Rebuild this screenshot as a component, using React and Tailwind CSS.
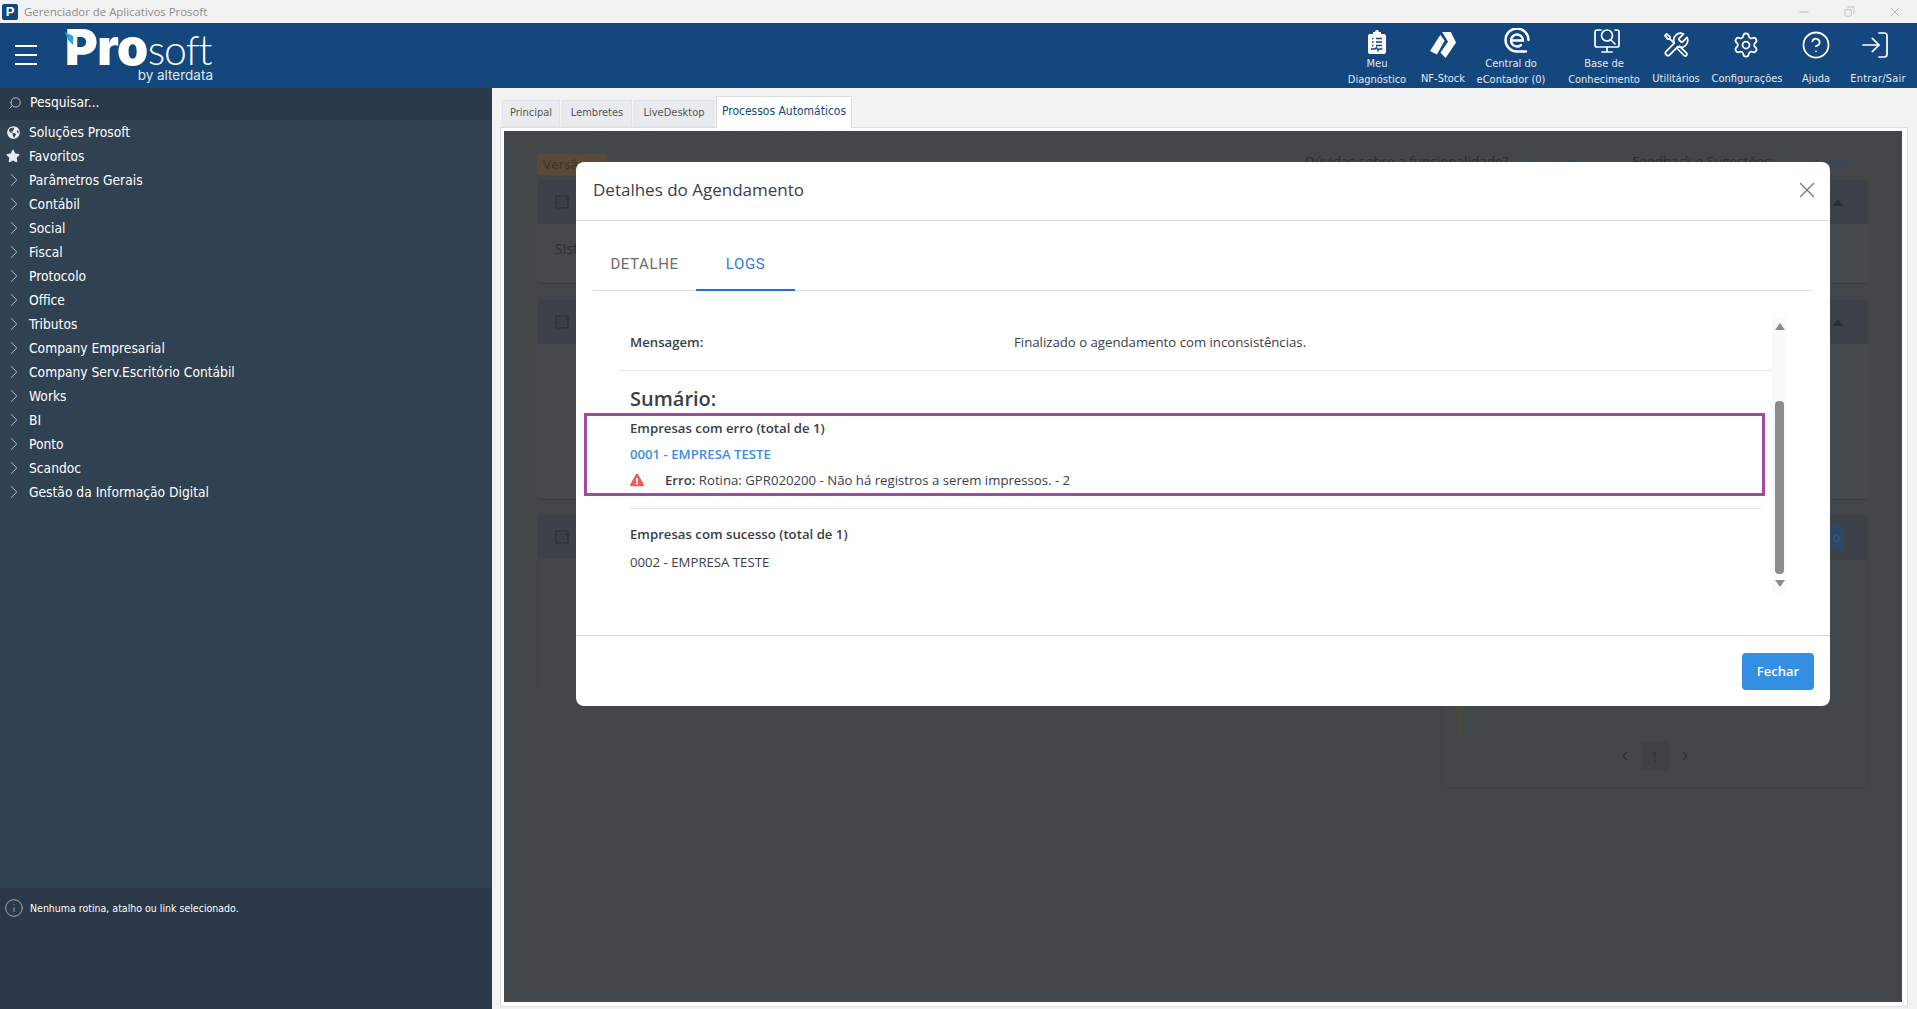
import React from 'react'
import { ChevronLeft, ChevronRight, CircleHelp, Info, LogIn, Search, Settings, X, Minus, Copy } from 'lucide-react'
import { FaExclamationTriangle, FaGlobeAmericas, FaStar } from 'react-icons/fa'

const MENU = [
  'Parâmetros Gerais', 'Contábil', 'Social', 'Fiscal', 'Protocolo', 'Office', 'Tributos',
  'Company Empresarial', 'Company Serv.Escritório Contábil', 'Works', 'BI', 'Ponto', 'Scandoc',
  'Gestão da Informação Digital',
]

function DiagnosticIcon() {
  return (
    <svg width="20" height="24" viewBox="0 0 20 24">
      <path fill="#fff" d="M6 2h2a2 2 0 0 1 4 0h2v2h3a2 2 0 0 1 2 2v16a2 2 0 0 1-2 2H3a2 2 0 0 1-2-2V6a2 2 0 0 1 2-2h3z" />
      <path stroke="#14477d" strokeWidth="1.4" fill="none" d="M5 8.5h1.5M9 8.5h6M5 12h1.5M9 12h6M5 15.5h1.500M9 15.5h6M4 19h4l1.500-1.500 1.500 3 1-1.500h3.500" />
    </svg>
  )
}

function StockIcon() {
  return (
    <svg width="26" height="26" viewBox="0 0 75 75" fill="#fff">
      <path d="M0 55 30 8l12 17-22 40z" />
      <path d="M35 0h25l15 30-30 45-15-15 22-32z" />
    </svg>
  )
}

function ContadorIcon() {
  return (
    <svg width="26" height="26" viewBox="0 0 26 26" fill="none" stroke="#fff" strokeWidth="2.4" strokeLinecap="round">
      <path d="M22 23.500H13A11.500 11.500 0 1 1 24.500 12" />
      <path d="M7 12.500h12a6 6 0 1 0-2 4.500" />
    </svg>
  )
}

function KnowledgeIcon() {
  return (
    <svg width="26" height="26" viewBox="0 0 26 26" fill="none" stroke="#fff" strokeWidth="1.7" strokeLinecap="round">
      <path d="M7 2H3a2 2 0 0 0-2 2v13a2 2 0 0 0 2 2h20a2 2 0 0 0 2-2V4a2 2 0 0 0-2-2h-2" />
      <circle cx="13" cy="7.500" r="5.500" />
      <path d="m17 12 4 4M13 19v4M8 24h10" />
    </svg>
  )
}

function ToolsIcon() {
  return (
    <svg width="28" height="28" viewBox="0 0 24 24" fill="none" stroke="#fff" strokeWidth="1.500" strokeLinecap="round" strokeLinejoin="round">
      <path d="M14.700 6.300a1 1 0 0 0 0 1.400l1.600 1.600a1 1 0 0 0 1.400 0l3.770-3.770a6 6 0 0 1-7.940 7.940l-6.910 6.910a2.120 2.120 0 0 1-3-3l6.910-6.910a6 6 0 0 1 7.940-7.940l-3.760 3.760z" />
      <path d="M2.500 4 4 2.500l3 2.500-.500 1.500L5 7zM6.500 6.500l4 4M13 15l2-2 6 6a1.400 1.400 0 0 1-2 2z" />
    </svg>
  )
}

function HeaderItem({ icon, lines, width, iconClass = '', labelClass = '' }) {
  return (
    <div className={`${width} h-full flex flex-col items-center`}>
      <div className={`h-[38px] pt-[5px] flex items-center justify-center ${iconClass}`}>{icon}</div>
      <div className={`text-[11px] leading-[16px] text-[#e3e9f0] text-center whitespace-nowrap h-[27px] flex flex-col justify-end ${lines.length === 1 ? 'pb-[1px]' : ''} ${labelClass}`}>
        {lines.map((l) => <span key={l}>{l}</span>)}
      </div>
    </div>
  )
}

function Logo() {
  return (
    <div className="relative w-[148px] ml-[13px] mt-[5px] flex flex-col text-white">
      <div className="h-[38px] leading-[38px] whitespace-nowrap">
        <span className="font-['Inter',sans-serif] text-[50px] font-black tracking-[-0.500px]">Pro</span>
        <span className="font-['Lato',sans-serif] text-[41px] font-light tracking-[-1px]">soft</span>
      </div>
      <div className="mt-[2px] text-right font-['Inter',sans-serif] text-[13.500px] leading-[14px] text-[#dfe7ef]">by alterdata</div>
      <svg className="absolute left-0 top-[4px]" width="9" height="13" viewBox="0 0 9 13">
        <path fill="#2ba3dc" d="M0 0l8 4v9L3 8z" />
      </svg>
    </div>
  )
}

function Caret() {
  return (
    <svg className="mr-[6px]" width="12" height="7" viewBox="0 0 12 7"><path fill="#70767f" d="M6 0l6 7H0z" /></svg>
  )
}

function CardHeader({ children }) {
  return <div className="h-[44px] bg-[#98a2b6] rounded-t flex items-center justify-between px-[18px]">{children}</div>
}

function CalendarGlyph() {
  return (
    <svg width="14" height="14" viewBox="0 0 14 14" fill="none" stroke="#6e7680" strokeWidth="1.200">
      <rect x="1" y="1" width="12" height="12" rx="1" />
      <path d="M1 4h12M4 7h6M4 9.500h6" strokeDasharray="1 1" />
    </svg>
  )
}

// Page behind the modal, seen through the backdrop
function BackgroundPage() {
  return (
    <div className="h-full bg-[#a7b1b9] pl-[33px] pr-[34px] pt-[23px] text-[#6e7680] text-[14px] font-['Open_Sans',sans-serif]">
      <div className="h-[21px] flex items-center justify-between">
        <div className="w-[70px] h-[21px] bg-[#e1b984] rounded px-[6px] text-[13px] leading-[21px] font-semibold text-[#a58a62]">Versão</div>
        <div className="flex gap-[50px] pr-[20px] pb-[6px] text-[13.500px]">
          <span>Dúvidas sobre a funcionalidade? <span className="underline text-[#7ab4f5]">Clique aqui</span></span>
          <span>Feedback e Sugestões: <span className="underline text-[#7ab4f5]">Clique aqui</span></span>
        </div>
      </div>
      <div className="mt-[5px] h-[104px] bg-[#acb4be] rounded border-b border-[#8f98a2]">
        <CardHeader>
          <CalendarGlyph />
          <Caret />
        </CardHeader>
        <div className="pl-[18px] pt-[14px]">Sistema</div>
      </div>
      <div className="mt-[16px] h-[200px] bg-[#acb4be] rounded border-b border-[#8f98a2]">
        <CardHeader>
          <CalendarGlyph />
          <Caret />
        </CardHeader>
      </div>
      <div className="mt-[15px]">
        <CardHeader>
          <CalendarGlyph />
          <div className="w-[60px] h-[25px] mr-[6px] rounded bg-[#6cb4ff] text-[#a9d0ff] text-right pr-[4px] leading-[25px] text-[13px]">o</div>
        </CardHeader>
        <div className="grid grid-cols-[1fr_427px]">
          <div className="h-[130px] border-l border-[#9aa4ac]" />
          <div className="h-[229px] border border-[#9aa4ac] rounded-b px-[16px]">
            <div className="text-right pt-[32px] pr-[21px] underline text-[#7ab4f5]">Detalhe</div>
            <div className="w-[3px] h-[76px] mt-[45px] bg-[#b8b98a]" />
            <div className="mt-[8px] flex items-center justify-center gap-[8px] text-[#767d87]">
              <ChevronLeft size={16} />
              <div className="w-[28px] h-[28px] rounded bg-[#9da5b1] flex items-center justify-center text-[14px]">1</div>
              <ChevronRight size={16} />
            </div>
          </div>
        </div>
      </div>
    </div>
  )
}

function LogsModal() {
  return (
    <div className="absolute left-[72px] top-[31px] w-[1254px] h-[544px] bg-white rounded-lg flex flex-col font-['Open_Sans',sans-serif] text-[#3b4046]">
      <div className="h-[59px] shrink-0 border-b border-[#d3dae2] flex items-center justify-between pl-[17px] pr-[10px] pb-[2px]">
        <div className="text-[17px] font-medium text-[#3a4148]">Detalhes do Agendamento</div>
        <X size={26} strokeWidth={1.200} className="text-[#777]" />
      </div>

      <div className="mx-[17px] mt-[21px] h-[49px] shrink-0 border-b border-[#e0e0e0] flex font-['Roboto',sans-serif] text-[15px] tracking-[0.6px]">
        <div className="w-[103px] h-[48px] pb-[3px] flex items-center justify-center text-[#6d6d6d]">DETALHE</div>
        <div className="w-[99px] h-[49px] pb-[3px] flex items-center justify-center text-[#2b80d6] border-b-2 border-[#1976d2]">LOGS</div>
      </div>

      <div className="mt-[27px] ml-[42px] w-[1169px] h-[275px] flex shrink-0">
        <div className="w-[1154px] shrink-0 text-[13.2px]">
          <div className="h-[53px] pb-[2px] pl-[12px] border-b border-[#e4e7eb] flex items-center">
            <div className="w-[384px] font-semibold">Mensagem:</div>
            <div>Finalizado o agendamento com inconsistências.</div>
          </div>
          <div className="pl-[12px] pr-[11px]">
            <div className="mt-[14px] text-[20px] leading-[28px] font-semibold">Sumário:</div>
            <div className="mt-[5px] leading-[20px] font-semibold">Empresas com erro (total de 1)</div>
            <div className="mt-[6px] leading-[20px] font-semibold text-[#3a8fe0]">0001 - EMPRESA TESTE</div>
            <div className="mt-[6px] leading-[20px] flex items-center">
              <FaExclamationTriangle size={14} className="text-[#f25a5a] mr-[21px]" />
              <span><b className="font-semibold">Erro:</b> Rotina: GPR020200 - Não há registros a serem impressos. - 2</span>
            </div>
            <div className="mt-[18px] border-t border-[#e1e4ea]" />
            <div className="mt-[15px] leading-[20px] font-semibold">Empresas com sucesso (total de 1)</div>
            <div className="mt-[8px] leading-[20px]">0002 - EMPRESA TESTE</div>
          </div>
        </div>
        <div className="w-[15px] bg-[#fafafa] flex flex-col items-center pt-[5px]">
          <svg width="10" height="7" viewBox="0 0 10 7"><path fill="#8c8c8c" d="M5 0l5 7H0z" /></svg>
          <div className="mt-[71px] w-[9px] h-[173px] rounded-[4px] bg-[#8c8c8c]" />
          <svg className="mt-[6px]" width="10" height="7" viewBox="0 0 10 7"><path fill="#8c8c8c" d="M5 7l5-7H0z" /></svg>
        </div>
      </div>

      <div className="mt-auto h-[71px] border-t border-[#d6d6d6] flex justify-end pt-[17px] pr-[16px]">
        <div className="w-[72px] h-[37px] rounded bg-[#348ee2] text-white text-[13px] font-semibold flex items-center justify-center">Fechar</div>
      </div>

      {/* highlight drawn over the screenshot */}
      <div className="absolute left-[8px] top-[251px] w-[1181px] h-[83px] border-[3px] border-[#a349a4]" />
    </div>
  )
}

export default function App() {
  return (
    <div className="h-screen flex flex-col overflow-hidden bg-[#f2f2f2] font-['DejaVu_Sans_Condensed','DejaVu_Sans',sans-serif]">
      {/* Title bar */}
      <div className="h-[23px] shrink-0 flex items-center pl-[2px] bg-[#f2f2f2]">
        <div className="w-[16px] h-[16px] rounded-[2px] bg-[#14477d] text-white text-[13px] leading-[16px] font-bold text-center font-['Liberation_Sans',sans-serif]">P</div>
        <div className="ml-[6px] text-[11.400px] text-[#8b8b8b] font-['Open_Sans',sans-serif]">Gerenciador de Aplicativos Prosoft</div>
        <div className="ml-auto flex items-center text-[#8a8a8a]">
          <Minus size={14} strokeWidth={1} className="mr-[33px]" />
          <Copy size={11} strokeWidth={1} className="mr-[33px] -scale-x-100" />
          <X size={14} strokeWidth={1} className="mr-[15px]" />
        </div>
      </div>

      {/* Header */}
      <div className="h-[65px] shrink-0 bg-[#14477d] flex">
        <div className="pl-[15px] pt-[22px] w-[37px] box-content flex flex-col gap-[7px]">
          <div className="h-[2px] w-[22px] bg-white" />
          <div className="h-[2px] w-[22px] bg-white" />
          <div className="h-[2px] w-[22px] bg-white" />
        </div>
        <Logo />
        <div className="ml-auto flex pr-[3px]">
          <HeaderItem width="w-[66px]" iconClass="-translate-y-[3px]" icon={<DiagnosticIcon />} lines={['Meu', 'Diagnóstico']} />
          <HeaderItem width="w-[66px]" icon={<StockIcon />} lines={['NF-Stock']} />
          <HeaderItem width="w-[82px]" iconClass="-translate-y-[4px]" labelClass="-ml-[12px]" icon={<ContadorIcon />} lines={['Central do', 'eContador (0)']} />
          <HeaderItem width="w-[92px]" iconClass="-translate-y-[4px] translate-x-[3px]" icon={<KnowledgeIcon />} lines={['Base de', 'Conhecimento']} />
          <HeaderItem width="w-[52px]" icon={<ToolsIcon />} lines={['Utilitários']} />
          <HeaderItem width="w-[88px]" labelClass="ml-[2px]" icon={<Settings size={28} strokeWidth={1.500} className="text-white" />} lines={['Configurações']} />
          <HeaderItem width="w-[52px]" icon={<CircleHelp size={30} strokeWidth={1.400} className="text-white" />} lines={['Ajuda']} />
          <HeaderItem width="w-[72px]" iconClass="-translate-x-[3px]" labelClass="tracking-[0.2px]" icon={<LogIn size={32} strokeWidth={1.300} className="text-white" />} lines={['Entrar/Sair']} />
        </div>
      </div>

      <div className="flex-1 flex min-h-0">
        {/* Sidebar */}
        <div className="w-[492px] shrink-0 flex flex-col bg-[#304152] text-white text-[13.700px]">
          <div className="h-[32px] bg-[#2a3949] flex items-center pl-[8px] pb-[3px]">
            <Search size={14} strokeWidth={1.500} className="text-[#c7ced6] -scale-x-100" />
            <span className="ml-[8px]">Pesquisar...</span>
          </div>
          <div className="flex-1">
            <div className="h-[24px] flex items-center pl-[7px]">
              <FaGlobeAmericas size={13} className="text-[#e8ecf0]" />
              <span className="ml-[9px]">Soluções Prosoft</span>
            </div>
            <div className="h-[24px] flex items-center pl-[6px]">
              <FaStar size={14} className="text-[#e8ecf0]" />
              <span className="ml-[9px]">Favoritos</span>
            </div>
            {MENU.map((item) => (
              <div key={item} className="h-[24px] flex items-center pl-[3px]">
                <ChevronRight size={22} strokeWidth={1} className="text-[#c7ced6]" />
                <span className="ml-[4px]">{item}</span>
              </div>
            ))}
          </div>
          <div className="h-[121px] bg-[#2a3848] flex items-start pl-[4px] pt-[10px]">
            <Info size={20} strokeWidth={1.200} className="text-[#a4adb7]" />
            <span className="ml-[6px] text-[10.500px] leading-[20px]">Nenhuma rotina, atalho ou link selecionado.</span>
          </div>
        </div>

        {/* Main area */}
        <div className="flex-1 min-w-0 flex flex-col pl-[8px] pr-[9px] pt-[7px] pb-[2px]">
          <div className="h-[32px] shrink-0 flex items-end pl-[2px] text-[11px] gap-[2px]">
            <div className="w-[58px] h-[27px] bg-[#e9ebee] border border-[#e0e2e5] flex items-center justify-center text-[#555]">Principal</div>
            <div className="w-[70px] h-[27px] bg-[#e9ebee] border border-[#e0e2e5] flex items-center justify-center text-[#555]">Lembretes</div>
            <div className="w-[80px] h-[27px] bg-[#e9ebee] border border-[#e0e2e5] flex items-center justify-center text-[#555]">LiveDesktop</div>
            <div className="w-[136px] h-[32px] -mb-px bg-white border border-b-0 border-[#dedede] pb-[3px] flex items-center justify-center text-[#14477d] text-[12px] relative">Processos Automáticos</div>
          </div>
          <div className="flex-1 min-h-0 bg-white border border-[#dedede] pl-[3px] pr-[5px] pt-[3px] pb-[4px]">
            <div className="relative h-full overflow-hidden">
              <BackgroundPage />
              <div className="absolute inset-0 bg-black/60" />
              <LogsModal />
            </div>
          </div>
        </div>
      </div>
    </div>
  )
}
